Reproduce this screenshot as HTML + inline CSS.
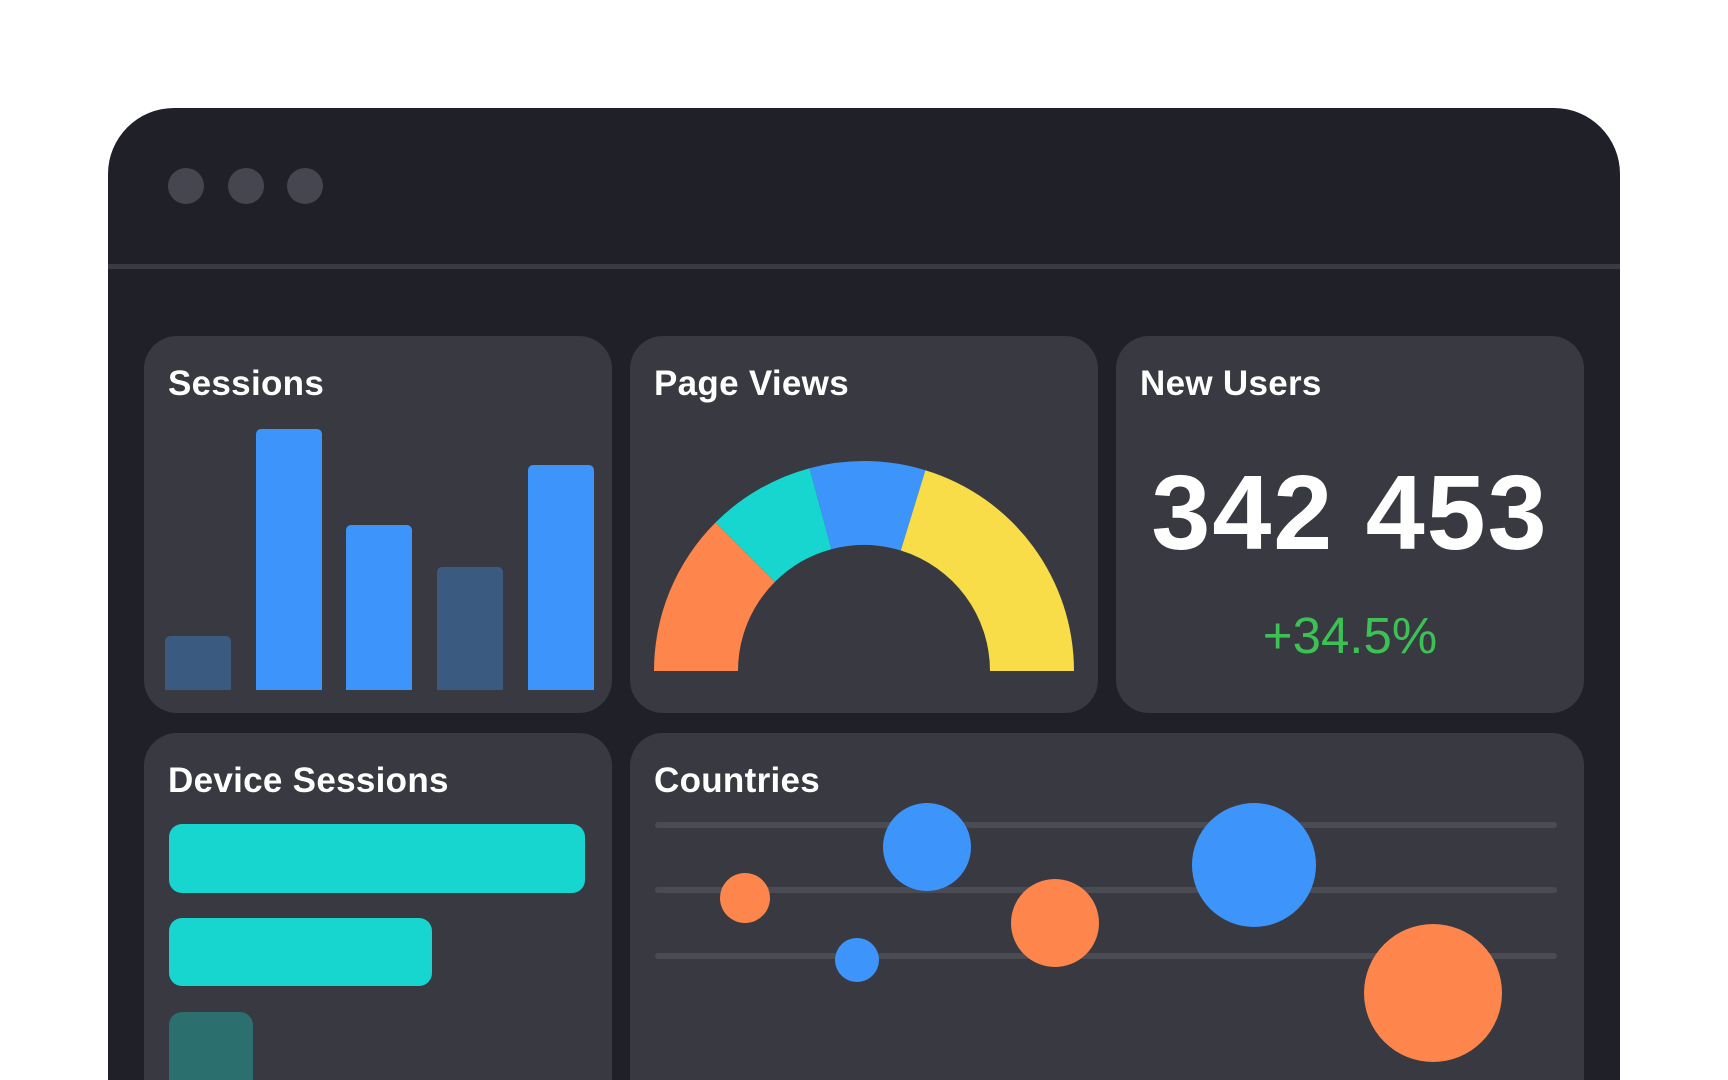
<!DOCTYPE html>
<html style="overflow:hidden;height:1080px"><head><style>
*{margin:0;padding:0;box-sizing:border-box}
body{width:1728px;height:1080px;background:#fff;position:relative;overflow:hidden;font-family:"Liberation Sans",sans-serif}
.win{position:absolute;left:108px;top:108px;width:1512px;height:972px;background:#202128;border-radius:66px 66px 0 0;overflow:hidden}
.dot{position:absolute;top:168px;width:36px;height:36px;border-radius:50%;background:#45464f}
.line{position:absolute;left:108px;top:264px;width:1512px;height:5px;background:#393a42}
.card{position:absolute;background:#383941;border-radius:33px;overflow:hidden}
.card.bot{border-radius:33px 33px 0 0}
.t{position:absolute;left:24px;top:28px;color:#fff;font-weight:bold;font-size:35px;letter-spacing:0.3px}
.b{position:absolute;border-radius:5px 5px 0 0}
.c{position:absolute;border-radius:50%}
</style></head><body>
<div class="win"></div>
<div class="dot" style="left:168px"></div>
<div class="dot" style="left:228px"></div>
<div class="dot" style="left:287px"></div>
<div class="line"></div>

<div class="card" style="left:144px;top:336px;width:468px;height:377px">
<div class="t">Sessions</div>
<div class="b" style="left:21px;top:300px;width:66px;height:54px;background:#3a5a80"></div>
<div class="b" style="left:112px;top:93px;width:66px;height:261px;background:#3d95fc"></div>
<div class="b" style="left:202px;top:189px;width:66px;height:165px;background:#3d95fc"></div>
<div class="b" style="left:293px;top:231px;width:66px;height:123px;background:#3a5a80"></div>
<div class="b" style="left:384px;top:129px;width:66px;height:225px;background:#3d95fc"></div>
</div>

<div class="card" style="left:630px;top:336px;width:468px;height:377px">
<div class="t">Page Views</div>
<svg style="position:absolute;left:0;top:0" width="468" height="377">
<g transform="translate(234,335)">
<path d="M-210 0 A210 210 0 0 1 -148.5 -148.5 L-89.1 -89.1 A126 126 0 0 0 -126 0Z" fill="#fe854b"/>
<path d="M-148.5 -148.5 A210 210 0 0 1 -54.4 -202.8 L-32.6 -121.7 A126 126 0 0 0 -89.1 -89.1Z" fill="#16d6cf"/>
<path d="M-54.4 -202.8 A210 210 0 0 1 61.4 -200.8 L36.8 -120.5 A126 126 0 0 0 -32.6 -121.7Z" fill="#3d95fc"/>
<path d="M61.4 -200.8 A210 210 0 0 1 210 0 L126 0 A126 126 0 0 0 36.8 -120.5Z" fill="#f8dc48"/>
</g></svg>
</div>

<div class="card" style="left:1116px;top:336px;width:468px;height:377px">
<div class="t">New Users</div>
<div style="position:absolute;left:0;width:468px;top:124px;text-align:center;color:#fff;font-weight:bold;font-size:106px;line-height:1;letter-spacing:2px">342 453</div>
<div style="position:absolute;left:0;width:468px;top:274px;text-align:center;color:#3cc254;font-size:51px;line-height:1">+34.5%</div>
</div>

<div class="card bot" style="left:144px;top:733px;width:468px;height:347px">
<div class="t">Device Sessions</div>
<div style="position:absolute;left:25px;top:91px;width:416px;height:69px;border-radius:13px;background:#16d6cf"></div>
<div style="position:absolute;left:25px;top:185px;width:263px;height:68px;border-radius:13px;background:#16d6cf"></div>
<div style="position:absolute;left:25px;top:279px;width:84px;height:100px;border-radius:13px;background:#2b6f6f"></div>
</div>

<div class="card bot" style="left:630px;top:733px;width:954px;height:347px">
<div class="t">Countries</div>
<div style="position:absolute;left:25px;top:89px;width:902px;height:6px;border-radius:3px;background:#4a4b53"></div>
<div style="position:absolute;left:25px;top:154px;width:902px;height:6px;border-radius:3px;background:#4a4b53"></div>
<div style="position:absolute;left:25px;top:220px;width:902px;height:6px;border-radius:3px;background:#4a4b53"></div>
<div class="c" style="left:253px;top:70px;width:88px;height:88px;background:#3d95fc"></div>
<div class="c" style="left:90px;top:140px;width:50px;height:50px;background:#fe854b"></div>
<div class="c" style="left:381px;top:146px;width:88px;height:88px;background:#fe854b"></div>
<div class="c" style="left:205px;top:205px;width:44px;height:44px;background:#3d95fc"></div>
<div class="c" style="left:562px;top:70px;width:124px;height:124px;background:#3d95fc"></div>
<div class="c" style="left:734px;top:191px;width:138px;height:138px;background:#fe854b"></div>
</div>
</body></html>
